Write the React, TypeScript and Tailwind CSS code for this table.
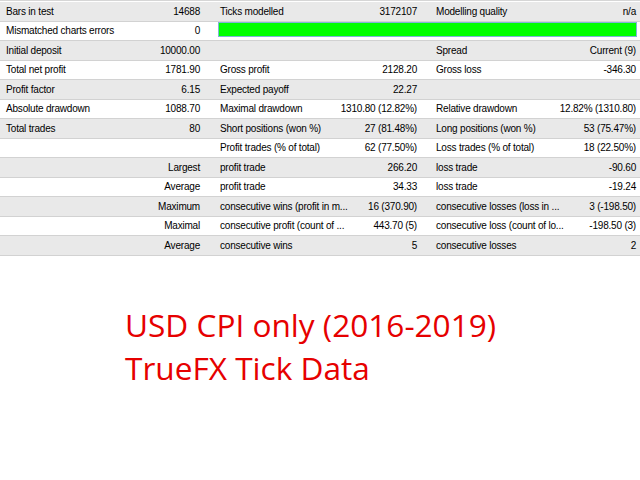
import React from "react";

type Row = [string, string, string, string, string, string];

const rows: Row[] = [
  ["Bars in test", "14688", "Ticks modelled", "3172107", "Modelling quality", "n/a"],
  ["Mismatched charts errors", "0", "", "", "", ""],
  ["Initial deposit", "10000.00", "", "", "Spread", "Current (9)"],
  ["Total net profit", "1781.90", "Gross profit", "2128.20", "Gross loss", "-346.30"],
  ["Profit factor", "6.15", "Expected payoff", "22.27", "", ""],
  ["Absolute drawdown", "1088.70", "Maximal drawdown", "1310.80 (12.82%)", "Relative drawdown", "12.82% (1310.80)"],
  ["Total trades", "80", "Short positions (won %)", "27 (81.48%)", "Long positions (won %)", "53 (75.47%)"],
  ["", "", "Profit trades (% of total)", "62 (77.50%)", "Loss trades (% of total)", "18 (22.50%)"],
  ["", "Largest", "profit trade", "266.20", "loss trade", "-90.60"],
  ["", "Average", "profit trade", "34.33", "loss trade", "-19.24"],
  ["", "Maximum", "consecutive wins (profit in m...", "16 (370.90)", "consecutive losses (loss in ...", "3 (-198.50)"],
  ["", "Maximal", "consecutive profit (count of ...", "443.70 (5)", "consecutive loss (count of lo...", "-198.50 (3)"],
  ["", "Average", "consecutive wins", "5", "consecutive losses", "2"],
];

export default function App() {
  return (
    <div className="w-[640px] h-[480px] bg-white overflow-hidden" style={{ fontFamily: '"Liberation Sans", Arial, sans-serif' }}>
      <div className="pt-[1px] border-t border-[#d6d6d6]">
        {rows.map((r, i) => (
          <div
            key={i}
            className={`flex items-center h-[19.5px] border-b border-[#d2d2d2] text-[10px] tracking-[-0.2px] text-black whitespace-nowrap ${i % 2 === 0 ? "bg-[#e9e9e9]" : "bg-white"}`}
          >
            <div className="w-[130px] pl-[6px] overflow-visible">{r[0]}</div>
            <div className="w-[70px] text-right">{r[1]}</div>
            {i === 1 ? (
              <div className="ml-[18px] w-[419px] h-[15px] bg-[#00ff00] border border-[#7fb4d8] self-start mt-0"></div>
            ) : (
              <>
                <div className="w-[127px] pl-[20px]">{r[2]}</div>
                <div className="w-[90px] text-right">{r[3]}</div>
                <div className="w-[131px] pl-[19px]">{r[4]}</div>
                <div className="w-[88px] text-right">{r[5]}</div>
              </>
            )}
          </div>
        ))}
      </div>
      <div
        className="mt-[47px] ml-[125px] text-[#e60000] text-[31.6px] leading-[43px]"
        style={{ fontFamily: '"Open Sans", "Noto Sans", sans-serif' }}
      >
        <div>USD CPI only (2016-2019)</div>
        <div>TrueFX Tick Data</div>
      </div>
    </div>
  );
}
